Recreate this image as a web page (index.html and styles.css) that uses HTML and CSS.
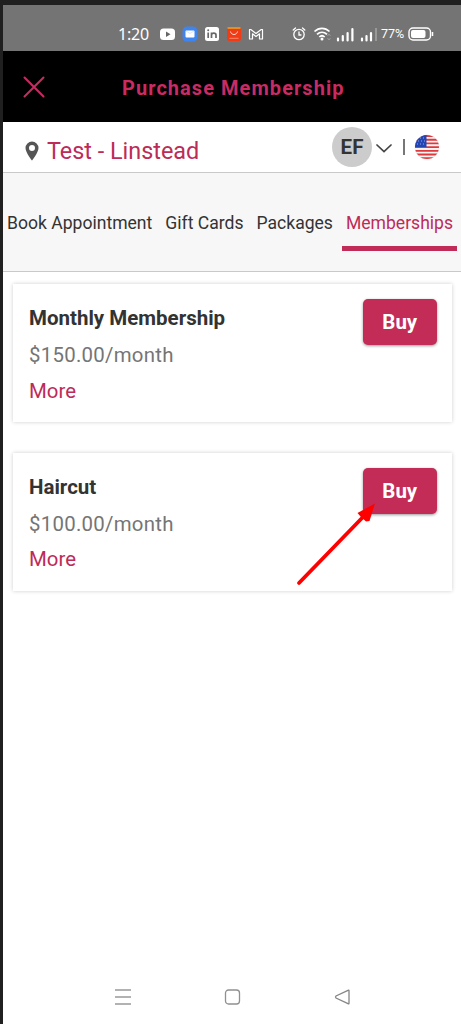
FILE: index.html
```html
<!DOCTYPE html>
<html lang="en">
<head>
<meta charset="utf-8">
<title>Purchase Membership</title>
<link rel="stylesheet" href="styles.css">
</head>
<body>
<div class="phone">
  <div class="status">
    <span class="clock">1:20</span>
    <svg class="status-apps" width="106" height="16" viewBox="0 0 106 16">
      <rect x="0" y="2.500" width="15" height="11.500" rx="3.500" fill="#fff"/><path d="M6 5.500v5.500l4.500-2.750z" fill="#666"/>
      <rect x="22.500" y="0.500" width="15" height="15" rx="4.500" fill="#4084ee"/><rect x="25.500" y="4.500" width="9" height="7" rx="1" fill="#fff"/><path d="M26 5l4 2.500L34 5" fill="none" stroke="#cfe0fc" stroke-width=".8"/>
      <rect x="45" y="1" width="14" height="14" rx="2.500" fill="#fff"/><path d="M48.200 6.500v5.500M51.500 12V6.500M51.500 9c0-2.500 4.500-2.500 4.500 0v3" fill="none" stroke="#686868" stroke-width="1.700"/><circle cx="48.200" cy="4.200" r="1" fill="#686868"/>
      <rect x="67" y="1" width="14" height="14" rx="2.500" fill="#ef3b16"/><path d="M67.500 1h13v2h-13z" fill="#e98b21"/><path d="M70.500 5.500c.7 4 6.300 4 7 0" fill="none" stroke="#ffd9ca" stroke-width="1"/><path d="M69.500 12.300h9" stroke="#ff8866" stroke-width="1"/>
      <path d="M89.500 13V3.500h1.300L96 7.500l5.200-4h1.300V13h-3V7.800L96 10.500l-3.500-2.700V13z" fill="none" stroke="#fff" stroke-width="1.200" stroke-linejoin="round"/>
    </svg>
    <svg class="status-radio" width="86" height="16" viewBox="0 0 86 16">
      <g fill="none" stroke="#fff" stroke-width="1.300" stroke-linecap="round"><circle cx="7" cy="8.500" r="5.200"/><path d="M7 6v3h2M1.200 4l2.300-2M12.800 4l-2.300-2"/></g>
      <g fill="none" stroke="#fff" stroke-width="1.700"><path d="M22.500 5.500c4.500-4.200 10.500-4.200 15 0M25 8.400c3-2.800 7-2.800 10 0M27.300 11c1.600-1.500 3.800-1.500 5.400 0"/></g><circle cx="30" cy="13" r="1.500" fill="#fff"/>
      <path d="M35.500 10l1.500-2 1.500 2M35.500 12l1.500 2 1.500-2" fill="none" stroke="#999"/>
      <path d="M46 14.500v-2M50.800 14.500V10M55.600 14.500V7M60.400 14.500V3M70 14.500v-2M74.500 14.500V10M79 14.500V7" stroke="#fff" stroke-width="2.200" stroke-linecap="round"/><path d="M84 15V2" stroke="#999" stroke-width="2"/>
    </svg>
    <span class="percent">77%</span>
    <svg class="battery" width="26" height="14" viewBox="0 0 26 14"><rect x="1" y="1" width="21.500" height="12" rx="4" fill="none" stroke="#fff" stroke-width="1.400"/><rect x="3" y="3" width="14.500" height="8" rx="2" fill="#fff"/><path d="M24.500 5v4" stroke="#fff" stroke-width="1.500"/></svg>
  </div>
  <header class="header">
    <svg class="close" width="22" height="22" viewBox="0 0 22 22"><path d="M1.500 1.500l19 19M20.500 1.500l-19 19" stroke="#c92b63" stroke-width="2" stroke-linecap="round"/></svg>
    <h1 class="title">Purchase Membership</h1>
  </header>
  <div class="location">
    <svg class="pin" width="14" height="20" viewBox="0 0 14 20"><path fill="#555" fill-rule="evenodd" d="M7 .5A6.500 6.500 0 0 0 .5 7c0 4.500 6.500 12.500 6.500 12.500S13.500 11.500 13.500 7A6.500 6.500 0 0 0 7 .5zm0 3.400a3 3 0 1 1 0 6 3 3 0 0 1 0-6z"/></svg>
    <span class="place">Test - Linstead</span>
    <span class="avatar">EF</span>
    <svg class="chevron" width="16" height="9" viewBox="0 0 16 9"><path d="M1 1l7 6.500L15 1" fill="none" stroke="#444" stroke-width="1.700" stroke-linecap="round"/></svg>
    <span class="divider"></span>
    <svg class="flag" width="26" height="26" viewBox="0 0 26 26"><defs><clipPath id="round"><circle cx="13" cy="13" r="12"/></clipPath></defs><circle cx="13" cy="13" r="12.300" fill="#ddd"/><g clip-path="url(#round)"><path fill="#f7f4f4" d="M0 0h26v26H0z"/><path d="M0 2h26M0 5.700h26M0 9.400h26M0 13.100h26M0 16.800h26M0 20.500h26M0 24.200h26" stroke="#e0393d" stroke-width="1.850"/><path fill="#2345b4" d="M0 0h12.500v13H0z"/><path d="M3 4h9M1 7h11M3 10h9" stroke="#91a5e6" stroke-width="1" stroke-dasharray="1 2"/></g></svg>
  </div>
  <nav class="tabs">
    <span class="tab">Book Appointment</span>
    <span class="tab">Gift Cards</span>
    <span class="tab">Packages</span>
    <span class="tab active">Memberships</span>
  </nav>
  <main class="cards">
    <section class="card">
      <div class="info"><h2 class="name">Monthly Membership</h2><p class="price">$150.00/month</p><a class="more">More</a></div>
      <button class="buy">Buy</button>
    </section>
    <section class="card second">
      <div class="info"><h2 class="name">Haircut</h2><p class="price">$100.00/month</p><a class="more">More</a></div>
      <button class="buy">Buy</button>
      <svg class="arrow" width="82" height="86" viewBox="0 0 82 86"><path d="M4 81L68 15" stroke="#f00" stroke-width="3.800" stroke-linecap="round"/><path d="M80 1.500L62.500 11l3 3.500 5.500 5 3.500-.5z" fill="#f00"/></svg>
    </section>
  </main>
  <footer class="system-nav">
    <svg width="18" height="18" viewBox="0 0 18 18"><path d="M1 2h16M1 9h16M1 16h16" stroke="#999" stroke-width="1.500"/></svg>
    <svg width="18" height="18" viewBox="0 0 18 18"><rect x="1.500" y="2" width="14" height="14" rx="3" fill="none" stroke="#909090" stroke-width="1.300"/></svg>
    <svg width="18" height="18" viewBox="0 0 18 18"><path d="M15 2.800v12.400q0 1-1 .5L2 10q-1-1 0-2L14 2.300q1-.5 1 .5z" fill="none" stroke="#858585" stroke-width="1.300"/></svg>
  </footer>
</div>
</body>
</html>
```
FILE: styles.css
```css
* { box-sizing: border-box; }
body { margin: 0; background: #202020; font-family: Roboto, "Liberation Sans", sans-serif; color: #333; }
svg { display: block; flex: none; }
h1, h2, p { margin: 0; }
.phone { height: 1024px; padding: 5px 0 0 3px; display: flex; flex-direction: column; }
.status { height: 46px; flex: none; background: #747474; color: #fff; display: flex; align-items: center; padding: 12px 0 0 115px; }
.clock { width: 42px; font: 16px "Noto Sans", sans-serif; letter-spacing: -0.2px; line-height: 20px; }
.status-radio { margin-left: 26px; }
.percent { width: 26px; margin: 0 0 1px 3px; font-size: 12.500px; white-space: nowrap; }
.battery { margin-left: 1px; }
.header { height: 71px; flex: none; background: #000; display: flex; align-items: center; padding-left: 20px; }
.title { margin: 2px 0 0 77px; font-size: 20px; font-weight: 700; letter-spacing: 1.05px; color: #c92b63; white-space: nowrap; }
.location { height: 51px; flex: none; background: #fff; border-bottom: 1px solid #c9c9c9; display: flex; align-items: center; padding-left: 22px; }
.pin { margin-top: 7px; }
.place { width: 294px; padding: 8px 0 0 8px; font-size: 23.400px; line-height: 28px; color: #bd2b57; white-space: nowrap; }
.avatar { width: 40px; height: 40px; margin-left: -1px; flex: none; border-radius: 50%; background: #ccc; display: flex; align-items: center; justify-content: center; font-size: 20.500px; font-weight: 700; }
.chevron { margin: 2px 0 0 4px; }
.divider { width: 2px; height: 16px; margin-left: 11px; background: #777; }
.flag { margin-left: 9px; }
.tabs { height: 99px; flex: none; background: #f7f7f7; border-bottom: 1px solid #c9c9c9; display: flex; align-items: flex-start; padding: 27px 0 0 4px; gap: 13px; }
.tab { font-size: 17.570px; line-height: 46px; white-space: nowrap; }
.active { color: #bd2b57; border-bottom: 5px solid #c02b57; margin-left: -4px; padding: 0 4px; }
.cards { flex: 1; background: #fff; padding: 12px 9px 0 10px; }
.card { position: relative; height: 138px; display: flex; justify-content: space-between; padding: 15.400px 15.500px 0 16px; box-shadow: 0 0 4px rgba(0,0,0,.2); }
.second { margin-top: 31px; }
.info { padding-top: 1px; }
.name { font-size: 20.500px; line-height: 36px; }
.price, .more { display: block; font-size: 20.400px; }
.price { color: #757575; letter-spacing: .27px; line-height: 38px; }
.more { color: #bd2b57; line-height: 34px; }
.second .more { line-height: 32px; }
.buy { width: 73.500px; height: 46px; padding: 0; border: 0; border-radius: 5px; background: #c22c57; color: #fff; font: 700 20.500px Roboto, sans-serif; box-shadow: 0 1px 3px rgba(0,0,0,.4); }
.arrow { position: absolute; left: 282px; top: 49px; }
.system-nav { height: 54px; flex: none; background: #fff; display: flex; justify-content: center; gap: 92px; padding: 18px 0 0 1px; }
```
